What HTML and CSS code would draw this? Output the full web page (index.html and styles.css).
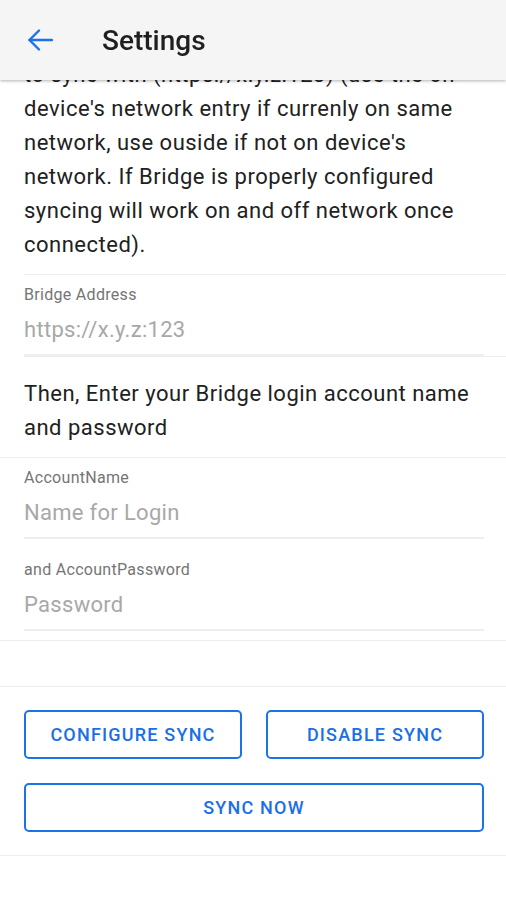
FILE: index.html
```html
<!DOCTYPE html>
<html lang="en">
<head>
<meta charset="UTF-8">
<meta name="viewport" content="width=device-width, initial-scale=1.0">
<title>Settings</title>
<link rel="stylesheet" href="styles.css">
</head>
<body>

  <!-- top bar, sits over the scrolled content -->
  <header class="app-bar">
    <button class="back-btn" aria-label="Back">
      <svg width="26" height="24" viewBox="0 0 26 24" fill="none" stroke="currentColor" stroke-width="2.4" stroke-linecap="round" stroke-linejoin="round">
        <path d="M25 12H2.5"/>
        <path d="M12 2.5L2.5 12l9.5 9.5"/>
      </svg>
    </button>
    <h1 class="app-title">Settings</h1>
  </header>

  <main class="content">
    <p class="intro">to sync with (https://x.y.z:123) (use the on device's network entry if currenly on same network, use ouside if not on device's network. If Bridge is properly configured syncing will work on and off network once connected).</p>

    <div class="group">
      <div class="field">
        <label class="field-label" for="bridgeAddress">Bridge Address</label>
        <input class="field-input" id="bridgeAddress" type="text" placeholder="https://x.y.z:123">
      </div>
    </div>

    <div class="group">
      <p class="text">Then, Enter your Bridge login account name and password</p>
    </div>

    <div class="group group-last">
      <div class="field">
        <label class="field-label" for="accountName">AccountName</label>
        <input class="field-input" id="accountName" type="text" placeholder="Name for Login">
      </div>
      <div class="field field-next">
        <label class="field-label" for="accountPassword">and AccountPassword</label>
        <input class="field-input" id="accountPassword" type="password" placeholder="Password">
      </div>
    </div>

    <div class="spacer"></div>

    <div class="actions">
      <button class="outline-btn">Configure Sync</button>
      <button class="outline-btn">Disable Sync</button>
      <button class="outline-btn wide">Sync Now</button>
    </div>
  </main>

</body>
</html>
```

FILE: styles.css
```css
body {
  margin: 0;
  background: #fff;
  font-family: Roboto, "Noto Sans", Arial, sans-serif;
  color: #212121;
}

.app-bar {
  position: fixed;
  top: 0;
  left: 0;
  right: 0;
  height: 80px;
  display: flex;
  align-items: center;
  background: #f5f5f5;
  box-shadow: 0 1px 3px rgba(0, 0, 0, 0.3);
  z-index: 10;
}

.back-btn {
  width: 26px;
  height: 24px;
  margin-left: 27px;
  padding: 0;
  border: none;
  background: none;
  color: #1a73e8;
  display: flex;
}

.app-title {
  margin: 0 0 0 49px;
  font-size: 28px;
  font-weight: 500;
  color: #1f1f1f;
}

.content {
  padding-top: 58px;
}

.intro,
.text {
  margin: 0;
  font-size: 22px;
  letter-spacing: 0.5px;
  line-height: 34px;
}

.intro {
  padding: 0 24px 12px;
}

.group {
  margin-left: 24px;
  border-top: 1px solid #eeeeee;
}

.group .text {
  padding: 20px 24px 12px 0;
}

.group-last {
  margin-left: 0;
  padding: 0 0 9px 24px;
  border-bottom: 1px solid #ececec;
}

.field {
  padding: 10px 22px 0 0;
}

.field-next {
  padding-top: 21px;
}

.field-label {
  display: block;
  font-size: 16px;
  letter-spacing: 0.3px;
  line-height: 20px;
  color: #757575;
}

.field-input {
  display: block;
  width: 100%;
  box-sizing: border-box;
  margin-top: 10px;
  padding: 0 0 9px;
  border: none;
  border-bottom: 2px solid #eeeeee;
  font-family: inherit;
  font-size: 22px;
  letter-spacing: 0.3px;
  line-height: 30px;
  color: #212121;
  background: none;
  outline: none;
}

.field-input::placeholder {
  color: #a8a8a8;
}

.spacer {
  height: 45px;
  border-bottom: 1px solid #ececec;
}

.actions {
  display: grid;
  grid-template-columns: 1fr 1fr;
  gap: 24px;
  padding: 23px 22px 23px 24px;
  border-bottom: 1px solid #eeeeee;
}

.outline-btn {
  height: 49px;
  border: 2px solid #1a73e8;
  border-radius: 5px;
  background: #fff;
  color: #1a6fe6;
  font-family: inherit;
  font-size: 18px;
  font-weight: 500;
  letter-spacing: 1.2px;
  text-transform: uppercase;
}

.wide {
  grid-column: 1 / 3;
}
```
